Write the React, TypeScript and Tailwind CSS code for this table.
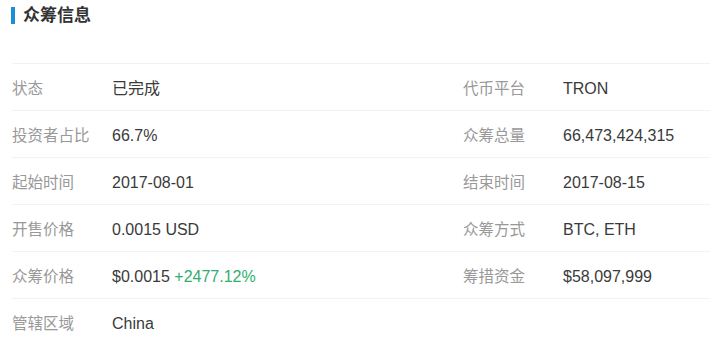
const rows: [string, React.ReactNode, string, React.ReactNode][] = [
  ['状态', '已完成', '代币平台', 'TRON'],
  ['投资者占比', '66.7%', '众筹总量', '66,473,424,315'],
  ['起始时间', '2017-08-01', '结束时间', '2017-08-15'],
  ['开售价格', '0.0015 USD', '众筹方式', 'BTC, ETH'],
  [
    '众筹价格',
    <>
      $0.0015 <span className="text-[#2fae6f]">+2477.12%</span>
    </>,
    '筹措资金',
    '$58,097,999',
  ],
  ['管辖区域', 'China', '', ''],
];

export default function App() {
  return (
    <div
      className="w-[710px] h-[345px] overflow-hidden bg-white"
      style={{ fontFamily: '"Liberation Sans", "Noto Sans CJK SC", sans-serif' }}
    >
      <div className="h-[63px] pl-[11px] pt-[7px]">
        <div className="flex items-center h-[17px]">
          <div className="w-[4px] h-[17px] bg-[#1b8fd4]" />
          <h2 className="ml-[8px] text-[17px] font-bold text-[#333] leading-none">众筹信息</h2>
        </div>
      </div>
      <div className="pl-[12px]">
        {rows.map(([l1, v1, l2, v2], i) => (
          <div
            key={i}
            className="flex items-center h-[47px] pt-[3px] border-t border-[#f2f2f2]"
          >
            <div className="flex items-center w-[451px]">
              <span className="w-[100px] text-[15.5px] text-[#999]">{l1}</span>
              <span className="text-[16px] text-[#3a3a3a]">{v1}</span>
            </div>
            <div className="flex items-center">
              <span className="w-[100px] text-[15.5px] text-[#999]">{l2}</span>
              <span className="text-[16px] text-[#3a3a3a]">{v2}</span>
            </div>
          </div>
        ))}
      </div>
    </div>
  );
}
